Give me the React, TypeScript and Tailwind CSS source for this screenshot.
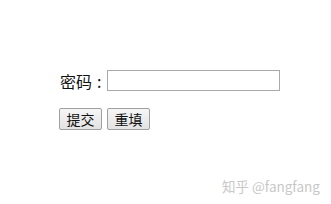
export default function App() {
  return (
    <div
      className="relative h-[204px] w-[331px] overflow-hidden bg-white"
      style={{ fontFamily: '"Noto Sans CJK SC", "Liberation Sans", sans-serif' }}
    >
      <div className="flex flex-col gap-[17px] pl-[59px] pt-[70px]">
        <div className="flex h-[21px] items-center">
          <label className="ml-px flex items-center text-[16px] leading-none text-[#111]">
            密码<span className="ml-[5px] mr-[6px]">:</span>
          </label>
          <input
            type="password"
            className="h-[21px] w-[173px] border border-[#a9a9a9] bg-white outline-none"
          />
        </div>
        <div className="flex gap-[5px]">
          <button className="h-[22px] w-[43px] rounded-[2px] border border-[#a0a0a0] bg-gradient-to-b from-[#f6f6f6] to-[#e3e3e3] text-[14px] leading-none text-[#111]">
            提交
          </button>
          <button className="h-[22px] w-[43px] rounded-[2px] border border-[#a0a0a0] bg-gradient-to-b from-[#f6f6f6] to-[#e3e3e3] text-[14px] leading-none text-[#111]">
            重填
          </button>
        </div>
      </div>
      <div className="absolute left-[222px] top-[176px] text-[13.5px] text-[#c8c8c8]">
        知乎 @fangfang
      </div>
    </div>
  );
}
